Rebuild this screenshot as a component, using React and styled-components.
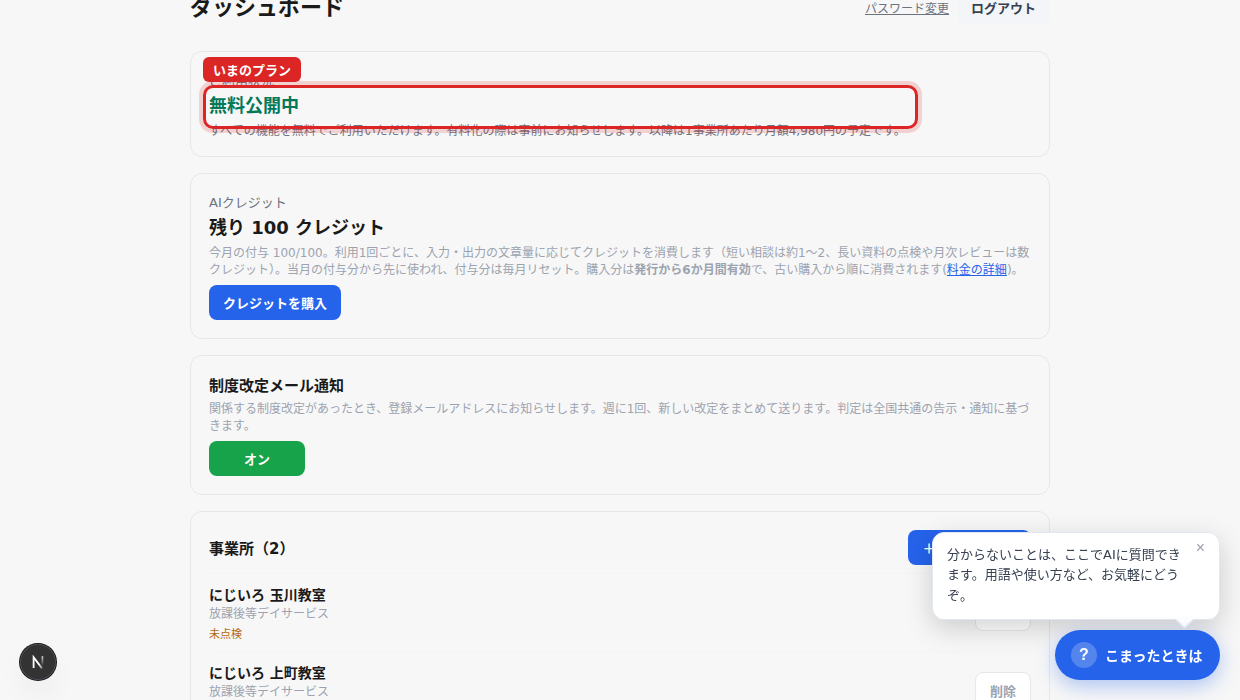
import React from 'react'
import styled, { createGlobalStyle } from 'styled-components'

const GlobalStyle = createGlobalStyle`
    * {
        box-sizing: border-box;
    }

    html,
    body {
        margin: 0;
        height: 700px;
        overflow: hidden;
        background: #f7f7f7;
    }

    body,
    button {
        font-family: 'DejaVu Sans', 'Noto Sans CJK JP', sans-serif;
    }

    body {
        color: #1a1a1a;
    }
`

const Page = styled.main`
    width: 860px;
    height: 700px;
    margin: 0 auto;
    overflow: hidden;
`

const Header = styled.header`
    display: flex;
    align-items: center;
    justify-content: space-between;
    height: 35px;
    margin-top: -10px;
    margin-bottom: 26px;
`

const Title = styled.h1`
    margin: 0;
    font-size: 22px;
    line-height: 32px;
`

const HeaderActions = styled.div`
    display: flex;
    align-items: center;
    gap: 8px;
`

const PasswordLink = styled.a`
    margin-top: 4px;
    color: #6b7280;
    font-size: 12px;
    line-height: 17px;
    text-decoration: underline;
`

const Button = styled.button`
    height: ${props => (props.$border ? 37 : 35)}px;
    min-width: ${props => props.$minWidth || 0}px;
    padding: 2px 14px 0;
    border: ${props => (props.$border ? `1px solid ${props.$border}` : 'none')};
    border-radius: 8px;
    background: ${props => props.$bg || '#2563eb'};
    color: ${props => props.$color || '#fff'};
    font-size: 13px;
    font-weight: 700;
    line-height: 19px;
    white-space: nowrap;
`

const AddButton = styled(Button)`
    padding-right: 13px;
`

const Card = styled.section`
    display: flex;
    flex-direction: column;
    align-items: flex-start;
    height: ${props => props.$height}px;
    margin-bottom: 16px;
    padding: 19px 18px 17px;
    border: 1px solid #e5e7eb;
    border-radius: 12px;
`

const Label = styled.div`
    color: #6b7280;
    font-size: 13px;
    line-height: 19px;
`

const Value = styled.div`
    margin-top: 3px;
    color: ${props => props.$color || '#1a1a1a'};
    font-size: 18px;
    font-weight: 700;
    line-height: 26px;
`

const CardTitle = styled.h2`
    margin: 0;
    font-size: 15px;
    line-height: 22px;
`

const Note = styled.p`
    margin: 4px 0 ${props => (props.$last ? 0 : 6)}px;
    color: ${props => props.$color || '#9ca3af'};
    font-size: 12px;
    line-height: 17px;
`

const NoteLink = styled.a`
    color: #2563eb;
    text-decoration: underline;
`

const Spotlight = styled.div`
    position: absolute;
    left: 203px;
    top: 85px;
    width: 715px;
    height: 44px;
    border: 3px solid #dc2626;
    border-radius: 10px;
    box-shadow: 0 0 0 4px rgba(220, 38, 38, 0.18);
`

const SpotlightLabel = styled.div`
    position: absolute;
    left: 203px;
    top: 57px;
    height: 25px;
    padding: 4px 10px 0;
    border-radius: 6px;
    background: #dc2626;
    color: #fff;
    font-size: 13px;
    font-weight: 700;
    line-height: 20px;
`

const OfficeHeader = styled.div`
    display: flex;
    align-items: center;
    justify-content: space-between;
    width: 100%;
    margin-top: -1px;
    margin-bottom: 8px;

    ${CardTitle} {
        padding-top: 2px;
    }
`

const OfficeRow = styled.div`
    display: flex;
    align-items: center;
    justify-content: space-between;
    flex-shrink: 0;
    width: 100%;
    height: 78px;
    border-top: 1px solid #f1f5f9;
`

const OfficeInfo = styled.div`
    padding-top: 2px;
`

const OfficeName = styled.div`
    font-size: 14px;
    font-weight: 700;
    line-height: 22px;
`

const OfficeType = styled.div`
    color: #9ca3af;
    font-size: 12px;
    line-height: 17px;
`

const OfficeStatus = styled.div`
    margin-top: 4px;
    color: #b4690e;
    font-size: 11px;
    line-height: 16px;
`

const Bubble = styled.aside`
    position: fixed;
    right: 20px;
    bottom: 80px;
    width: 288px;
    padding: 12px 36px 12px 14px;
    border: 1px solid #e2e8f0;
    border-radius: 12px;
    background: #fff;
    box-shadow: 0 8px 28px rgba(0, 0, 0, 0.18);
    color: #374151;
    font-size: 13px;
    line-height: 20.8px;

    &::after {
        content: '';
        position: absolute;
        right: 28px;
        bottom: -7px;
        width: 12px;
        height: 12px;
        border-right: 1px solid #e2e8f0;
        border-bottom: 1px solid #e2e8f0;
        background: #fff;
        transform: rotate(45deg);
    }
`

const BubbleClose = styled.span`
    position: absolute;
    right: 14px;
    top: 5px;
    color: #9ca3af;
    font-family: 'Liberation Sans', sans-serif;
    font-size: 16px;
    line-height: 20px;
`

const HelpButton = styled.button`
    position: fixed;
    right: 20px;
    bottom: 20px;
    display: flex;
    align-items: center;
    gap: 8px;
    width: 165px;
    height: 50px;
    padding: 0 16px;
    border: none;
    border-radius: 25px;
    background: #2563eb;
    box-shadow: 0 6px 20px rgba(37, 99, 235, 0.35);
    color: #fff;
    font-size: 14px;
    font-weight: 700;
    white-space: nowrap;
`

const HelpMark = styled.span`
    flex: none;
    width: 26px;
    height: 26px;
    border-radius: 50%;
    background: rgba(255, 255, 255, 0.22);
    font-family: 'Liberation Sans', sans-serif;
    font-size: 16px;
    line-height: 26px;
    text-align: center;
`

const DevBadge = styled.div`
    position: fixed;
    left: 20px;
    bottom: 20px;
    display: flex;
    align-items: center;
    justify-content: center;
    width: 36px;
    height: 36px;
    border-radius: 50%;
    background: #333;
    box-shadow: 0 0 0 1px #171717, inset 0 0 0 1px #4a4a52,
        0 16px 32px -8px rgba(0, 0, 0, 0.14);
`

const offices = [
    { name: 'にじいろ 玉川教室', type: '放課後等デイサービス', status: '未点検' },
    { name: 'にじいろ 上町教室', type: '放課後等デイサービス', status: '未点検' },
]

const NextMark = () => (
    <svg width="14" height="14" viewBox="0 0 14 14" fill="none">
        <defs>
            <linearGradient id="stem" x1="0" y1="1" x2="0" y2="11" gradientUnits="userSpaceOnUse">
                <stop stopColor="#fff" stopOpacity="0.8" />
                <stop offset="1" stopColor="#fff" stopOpacity="0" />
            </linearGradient>
            <linearGradient id="slash" x1="8" y1="9" x2="12" y2="14" gradientUnits="userSpaceOnUse">
                <stop stopColor="#fff" />
                <stop offset="1" stopColor="#fff" stopOpacity="0.3" />
            </linearGradient>
        </defs>
        <path d="M2.6 13V2.2L11 13.4" stroke="url(#slash)" strokeWidth="1.8" />
        <path d="M11.4 1.2v10.4" stroke="url(#stem)" strokeWidth="1.7" />
    </svg>
)

const App = () => {
    return (
        <>
            <GlobalStyle />
            <Page>
                <Header>
                    <Title>ダッシュボード</Title>
                    <HeaderActions>
                        <PasswordLink>パスワード変更</PasswordLink>
                        <Button $bg="#f3f5f9" $color="#374151">ログアウト</Button>
                    </HeaderActions>
                </Header>

                <Card $height={106}>
                    <Label>ご利用状況</Label>
                    <Value $color="#047857">無料公開中</Value>
                    <Note $last $color="#6b7280">
                        すべての機能を無料でご利用いただけます。有料化の際は事前にお知らせします。以降は1事業所あたり月額4,980円の予定です。
                    </Note>
                </Card>

                <Card $height={166}>
                    <Label>AIクレジット</Label>
                    <Value>残り 100 クレジット</Value>
                    <Note>
                        今月の付与 100/100。利用1回ごとに、入力・出力の文章量に応じてクレジットを消費します（短い相談は約1〜2、長い資料の点検や月次レビューは数クレジット）。当月の付与分から先に使われ、付与分は毎月リセット。購入分は<strong>発行から6か月間有効</strong>で、古い購入から順に消費されます(<NoteLink>料金の詳細</NoteLink>)。
                    </Note>
                    <Button>クレジットを購入</Button>
                </Card>

                <Card $height={140}>
                    <CardTitle>制度改定メール通知</CardTitle>
                    <Note>
                        関係する制度改定があったとき、登録メールアドレスにお知らせします。週に1回、新しい改定をまとめて送ります。判定は全国共通の告示・通知に基づきます。
                    </Note>
                    <Button $bg="#16a34a" $minWidth={96}>オン</Button>
                </Card>

                <Card $height={240}>
                    <OfficeHeader>
                        <CardTitle>事業所（2）</CardTitle>
                        <AddButton>＋ 事業所を追加</AddButton>
                    </OfficeHeader>
                    {offices.map(office => (
                        <OfficeRow key={office.name}>
                            <OfficeInfo>
                                <OfficeName>{office.name}</OfficeName>
                                <OfficeType>{office.type}</OfficeType>
                                <OfficeStatus>{office.status}</OfficeStatus>
                            </OfficeInfo>
                            <Button $bg="#fff" $color="#9ca3af" $border="#e5e7eb">削除</Button>
                        </OfficeRow>
                    ))}
                </Card>
            </Page>

            <Spotlight />
            <SpotlightLabel>いまのプラン</SpotlightLabel>

            <Bubble>
                分からないことは、ここでAIに質問できます。用語や使い方など、お気軽にどうぞ。
                <BubbleClose>×</BubbleClose>
            </Bubble>
            <HelpButton>
                <HelpMark>?</HelpMark>
                こまったときは
            </HelpButton>

            <DevBadge>
                <NextMark />
            </DevBadge>
        </>
    )
}

export default App
